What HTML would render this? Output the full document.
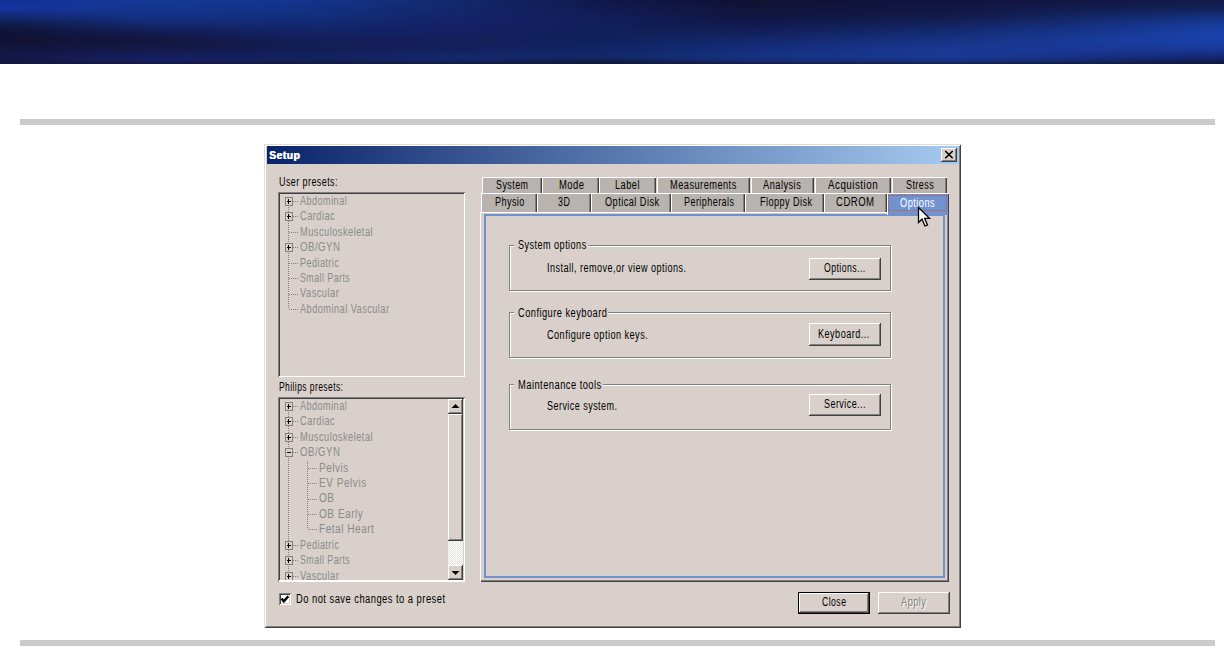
<!DOCTYPE html>
<html><head><meta charset="utf-8">
<style>
*{margin:0;padding:0;box-sizing:border-box}
html,body{width:1224px;height:653px;overflow:hidden;background:#fff}
body{position:relative;font-family:"Liberation Sans",sans-serif}
.a{position:absolute}
.t{position:absolute;font-size:12px;line-height:12px;white-space:nowrap;transform-origin:0 0}
.banner{left:0;top:0;width:1224px;height:63px;
 background:
  linear-gradient(180deg, rgba(10,10,40,0) 0%, rgba(10,10,40,0) 100%),
  radial-gradient(ellipse 260px 40px at 130px 50px, rgba(16,14,40,.85), rgba(16,14,40,0)),
  radial-gradient(ellipse 300px 30px at 760px 5px, rgba(14,12,36,.9), rgba(14,12,36,0)),
  radial-gradient(ellipse 200px 40px at 1180px 45px, rgba(35,80,200,.9), rgba(35,80,200,0)),
  radial-gradient(ellipse 250px 25px at 200px 8px, rgba(28,64,168,.8), rgba(28,64,168,0)),
  linear-gradient(90deg,#14286e 0%,#17307f 30%,#132a72 50%,#132563 65%,#142a78 80%,#1a3c9c 100%);
}
.rule{left:20px;width:1195px;height:6px;background:#cbcbcb}
.dlg{left:264px;top:144px;width:697px;height:484px;background:#d9d0cb;
 box-shadow:inset 1px 1px #dfdcd5, inset -1px -1px #404040, inset 2px 2px #fff, inset -2px -2px #808080}
.title{left:267px;top:146px;width:692px;height:18px;background:linear-gradient(90deg,#0a246a,#a6caf0)}
.raised{background:#d9d0cb;box-shadow:inset -1px -1px #404040, inset 1px 1px #fff, inset -2px -2px #808080}
.sunken{box-shadow:inset 1px 1px #808080, inset -1px -1px #fff, inset 2px 2px #404040, inset -2px -2px #d9d0cb}
.tab{background:#b8b3ae;box-shadow:inset 1px 1px #fff, inset -1px 0 #404040, inset -2px 0 #808080}
.etch{box-shadow:inset 1px 1px #808080, 1px 1px #fff, inset -1px -1px #fff}
.pbox{width:8px;height:9px;border:1px solid #808080;background:#d9d0cb}
.pbox:before{content:"";position:absolute;left:1px;top:3px;width:4px;height:1px;background:#000}
.pbox.plus:after{content:"";position:absolute;left:2px;top:1px;width:1px;height:5px;background:#000}
.vd{width:1px;background-image:linear-gradient(180deg,#808080 50%,transparent 50%);background-size:1px 2px}
.hd{height:1px;background-image:linear-gradient(90deg,#808080 50%,transparent 50%);background-size:2px 1px}
.z{z-index:5}
</style></head><body>
<div class="a" style="left:0;top:0;width:1224px;height:64px;overflow:hidden"><div class="a" style="left:0px;top:0;width:12px;height:64px;background:linear-gradient(180deg,rgb(18,48,153) 0.8%,rgb(21,52,159) 13.3%,rgb(19,40,115) 25.8%,rgb(15,28,71) 38.3%,rgb(15,19,53) 50.8%,rgb(16,18,53) 63.3%,rgb(18,21,61) 75.8%,rgb(19,23,70) 88.3%,rgb(19,24,69) 94.5%,rgb(17,24,61) 99.2%)"></div>
<div class="a" style="left:12px;top:0;width:12px;height:64px;background:linear-gradient(180deg,rgb(18,49,153) 0.8%,rgb(21,52,157) 13.3%,rgb(19,41,116) 25.8%,rgb(15,29,74) 38.3%,rgb(15,20,56) 50.8%,rgb(16,18,54) 63.3%,rgb(18,21,62) 75.8%,rgb(20,24,73) 88.3%,rgb(19,24,71) 94.5%,rgb(18,24,61) 99.2%)"></div>
<div class="a" style="left:24px;top:0;width:12px;height:64px;background:linear-gradient(180deg,rgb(18,49,153) 0.8%,rgb(21,52,156) 13.3%,rgb(19,42,117) 25.8%,rgb(16,30,77) 38.3%,rgb(15,20,58) 50.8%,rgb(17,18,54) 63.3%,rgb(18,21,62) 75.8%,rgb(20,24,75) 88.3%,rgb(20,25,74) 94.5%,rgb(18,24,62) 99.2%)"></div>
<div class="a" style="left:36px;top:0;width:12px;height:64px;background:linear-gradient(180deg,rgb(18,50,152) 0.8%,rgb(21,52,154) 13.3%,rgb(19,43,119) 25.8%,rgb(16,31,81) 38.3%,rgb(15,21,60) 50.8%,rgb(17,19,55) 63.3%,rgb(18,22,63) 75.8%,rgb(20,25,77) 88.3%,rgb(20,25,76) 94.5%,rgb(18,24,63) 99.2%)"></div>
<div class="a" style="left:48px;top:0;width:12px;height:64px;background:linear-gradient(180deg,rgb(18,51,152) 0.8%,rgb(21,52,153) 13.3%,rgb(19,43,120) 25.8%,rgb(16,32,84) 38.3%,rgb(16,22,63) 50.8%,rgb(17,19,56) 63.3%,rgb(18,22,64) 75.8%,rgb(20,25,79) 88.3%,rgb(20,26,78) 94.5%,rgb(18,24,64) 99.2%)"></div>
<div class="a" style="left:60px;top:0;width:12px;height:64px;background:linear-gradient(180deg,rgb(18,52,152) 0.8%,rgb(21,52,151) 13.3%,rgb(19,44,122) 25.8%,rgb(17,33,87) 38.3%,rgb(16,23,65) 50.8%,rgb(17,19,56) 63.3%,rgb(19,22,64) 75.8%,rgb(21,26,81) 88.3%,rgb(20,26,80) 94.5%,rgb(18,25,65) 99.2%)"></div>
<div class="a" style="left:72px;top:0;width:12px;height:64px;background:linear-gradient(180deg,rgb(19,53,151) 0.8%,rgb(20,53,150) 13.3%,rgb(19,45,123) 25.8%,rgb(17,34,90) 38.3%,rgb(16,23,67) 50.8%,rgb(18,20,57) 63.3%,rgb(19,23,65) 75.8%,rgb(21,26,83) 88.3%,rgb(21,27,82) 94.5%,rgb(18,25,65) 99.2%)"></div>
<div class="a" style="left:84px;top:0;width:12px;height:64px;background:linear-gradient(180deg,rgb(19,53,151) 0.8%,rgb(20,53,149) 13.3%,rgb(19,45,124) 25.8%,rgb(17,35,94) 38.3%,rgb(16,24,70) 50.8%,rgb(18,20,58) 63.3%,rgb(19,23,66) 75.8%,rgb(21,27,85) 88.3%,rgb(21,27,84) 94.5%,rgb(18,25,66) 99.2%)"></div>
<div class="a" style="left:96px;top:0;width:12px;height:64px;background:linear-gradient(180deg,rgb(19,54,151) 0.8%,rgb(20,53,147) 13.3%,rgb(19,46,126) 25.8%,rgb(17,36,97) 38.3%,rgb(17,25,72) 50.8%,rgb(18,20,58) 63.3%,rgb(19,23,67) 75.8%,rgb(21,28,88) 88.3%,rgb(21,28,86) 94.5%,rgb(18,25,67) 99.2%)"></div>
<div class="a" style="left:108px;top:0;width:12px;height:64px;background:linear-gradient(180deg,rgb(19,55,151) 0.8%,rgb(20,53,146) 13.3%,rgb(19,47,127) 25.8%,rgb(18,37,100) 38.3%,rgb(17,25,74) 50.8%,rgb(19,20,59) 63.3%,rgb(19,24,67) 75.8%,rgb(22,28,90) 88.3%,rgb(21,28,88) 94.5%,rgb(18,25,68) 99.2%)"></div>
<div class="a" style="left:120px;top:0;width:12px;height:64px;background:linear-gradient(180deg,rgb(19,56,150) 0.8%,rgb(20,53,144) 13.3%,rgb(19,48,129) 25.8%,rgb(18,38,104) 38.3%,rgb(17,26,77) 50.8%,rgb(19,21,60) 63.3%,rgb(19,24,68) 75.8%,rgb(22,29,92) 88.3%,rgb(22,29,90) 94.5%,rgb(18,25,69) 99.2%)"></div>
<div class="a" style="left:132px;top:0;width:12px;height:64px;background:linear-gradient(180deg,rgb(19,56,150) 0.8%,rgb(20,53,143) 13.3%,rgb(19,48,130) 25.8%,rgb(18,39,107) 38.3%,rgb(18,27,79) 50.8%,rgb(19,21,61) 63.3%,rgb(19,24,69) 75.8%,rgb(22,29,94) 88.3%,rgb(22,29,93) 94.5%,rgb(18,26,69) 99.2%)"></div>
<div class="a" style="left:144px;top:0;width:12px;height:64px;background:linear-gradient(180deg,rgb(19,57,150) 0.8%,rgb(20,53,141) 13.3%,rgb(19,49,131) 25.8%,rgb(19,40,110) 38.3%,rgb(18,28,81) 50.8%,rgb(19,21,61) 63.3%,rgb(19,25,69) 75.8%,rgb(22,30,96) 88.3%,rgb(22,30,95) 94.5%,rgb(19,26,70) 99.2%)"></div>
<div class="a" style="left:156px;top:0;width:12px;height:64px;background:linear-gradient(180deg,rgb(19,57,149) 0.8%,rgb(19,53,140) 13.3%,rgb(19,49,132) 25.8%,rgb(19,40,112) 38.3%,rgb(18,28,83) 50.8%,rgb(19,22,63) 63.3%,rgb(19,25,70) 75.8%,rgb(22,30,97) 88.3%,rgb(22,30,95) 94.5%,rgb(19,26,70) 99.2%)"></div>
<div class="a" style="left:168px;top:0;width:12px;height:64px;background:linear-gradient(180deg,rgb(19,57,149) 0.8%,rgb(19,53,140) 13.3%,rgb(19,49,131) 25.8%,rgb(19,40,112) 38.3%,rgb(18,29,85) 50.8%,rgb(19,23,65) 63.3%,rgb(19,25,71) 75.8%,rgb(22,30,96) 88.3%,rgb(22,30,94) 94.5%,rgb(18,26,70) 99.2%)"></div>
<div class="a" style="left:180px;top:0;width:12px;height:64px;background:linear-gradient(180deg,rgb(19,56,148) 0.8%,rgb(19,53,139) 13.3%,rgb(19,49,130) 25.8%,rgb(19,40,112) 38.3%,rgb(18,29,86) 50.8%,rgb(19,23,67) 63.3%,rgb(19,26,72) 75.8%,rgb(22,31,96) 88.3%,rgb(21,30,94) 94.5%,rgb(18,26,70) 99.2%)"></div>
<div class="a" style="left:192px;top:0;width:12px;height:64px;background:linear-gradient(180deg,rgb(19,56,148) 0.8%,rgb(19,52,139) 13.3%,rgb(19,49,130) 25.8%,rgb(19,40,112) 38.3%,rgb(18,30,88) 50.8%,rgb(19,24,69) 63.3%,rgb(19,26,74) 75.8%,rgb(21,31,96) 88.3%,rgb(21,30,93) 94.5%,rgb(18,26,70) 99.2%)"></div>
<div class="a" style="left:204px;top:0;width:12px;height:64px;background:linear-gradient(180deg,rgb(19,55,147) 0.8%,rgb(19,52,138) 13.3%,rgb(19,48,129) 25.8%,rgb(18,40,112) 38.3%,rgb(18,30,89) 50.8%,rgb(19,25,71) 63.3%,rgb(19,26,75) 75.8%,rgb(21,31,95) 88.3%,rgb(21,31,92) 94.5%,rgb(18,26,69) 99.2%)"></div>
<div class="a" style="left:216px;top:0;width:12px;height:64px;background:linear-gradient(180deg,rgb(19,55,147) 0.8%,rgb(19,52,138) 13.3%,rgb(19,48,128) 25.8%,rgb(18,40,112) 38.3%,rgb(18,31,91) 50.8%,rgb(19,26,74) 63.3%,rgb(19,27,76) 75.8%,rgb(21,31,95) 88.3%,rgb(20,31,92) 94.5%,rgb(18,26,69) 99.2%)"></div>
<div class="a" style="left:228px;top:0;width:12px;height:64px;background:linear-gradient(180deg,rgb(19,54,146) 0.8%,rgb(19,51,137) 13.3%,rgb(18,48,128) 25.8%,rgb(18,40,112) 38.3%,rgb(18,31,92) 50.8%,rgb(19,26,76) 63.3%,rgb(19,27,77) 75.8%,rgb(20,31,95) 88.3%,rgb(20,31,91) 94.5%,rgb(18,26,69) 99.2%)"></div>
<div class="a" style="left:240px;top:0;width:12px;height:64px;background:linear-gradient(180deg,rgb(19,54,146) 0.8%,rgb(19,51,136) 13.3%,rgb(18,48,127) 25.8%,rgb(18,40,112) 38.3%,rgb(18,32,94) 50.8%,rgb(18,27,78) 63.3%,rgb(18,27,78) 75.8%,rgb(20,32,95) 88.3%,rgb(20,31,90) 94.5%,rgb(18,26,69) 99.2%)"></div>
<div class="a" style="left:252px;top:0;width:12px;height:64px;background:linear-gradient(180deg,rgb(19,53,145) 0.8%,rgb(18,51,136) 13.3%,rgb(18,48,126) 25.8%,rgb(18,40,112) 38.3%,rgb(18,33,95) 50.8%,rgb(18,28,80) 63.3%,rgb(18,28,79) 75.8%,rgb(20,32,94) 88.3%,rgb(19,31,90) 94.5%,rgb(18,26,68) 99.2%)"></div>
<div class="a" style="left:264px;top:0;width:12px;height:64px;background:linear-gradient(180deg,rgb(19,53,145) 0.8%,rgb(18,50,135) 13.3%,rgb(18,47,126) 25.8%,rgb(18,40,112) 38.3%,rgb(18,33,97) 50.8%,rgb(18,28,82) 63.3%,rgb(18,28,80) 75.8%,rgb(19,32,94) 88.3%,rgb(19,31,89) 94.5%,rgb(17,26,68) 99.2%)"></div>
<div class="a" style="left:276px;top:0;width:12px;height:64px;background:linear-gradient(180deg,rgb(19,52,144) 0.8%,rgb(18,50,135) 13.3%,rgb(18,47,125) 25.8%,rgb(18,40,112) 38.3%,rgb(18,34,98) 50.8%,rgb(18,29,84) 63.3%,rgb(18,28,81) 75.8%,rgb(19,32,94) 88.3%,rgb(19,31,88) 94.5%,rgb(17,26,68) 99.2%)"></div>
<div class="a" style="left:288px;top:0;width:12px;height:64px;background:linear-gradient(180deg,rgb(19,52,144) 0.8%,rgb(18,50,134) 13.3%,rgb(18,47,124) 25.8%,rgb(18,40,112) 38.3%,rgb(18,34,100) 50.8%,rgb(18,30,86) 63.3%,rgb(18,29,83) 75.8%,rgb(19,32,93) 88.3%,rgb(18,31,88) 94.5%,rgb(17,26,68) 99.2%)"></div>
<div class="a" style="left:300px;top:0;width:12px;height:64px;background:linear-gradient(180deg,rgb(19,51,142) 0.8%,rgb(18,49,133) 13.3%,rgb(18,46,123) 25.8%,rgb(18,40,112) 38.3%,rgb(18,34,100) 50.8%,rgb(18,30,88) 63.3%,rgb(18,29,84) 75.8%,rgb(18,33,94) 88.3%,rgb(18,32,88) 94.5%,rgb(17,27,68) 99.2%)"></div>
<div class="a" style="left:312px;top:0;width:12px;height:64px;background:linear-gradient(180deg,rgb(19,50,139) 0.8%,rgb(18,48,131) 13.3%,rgb(18,45,122) 25.8%,rgb(18,40,111) 38.3%,rgb(19,34,100) 50.8%,rgb(18,30,88) 63.3%,rgb(18,29,84) 75.8%,rgb(19,33,95) 88.3%,rgb(18,32,89) 94.5%,rgb(17,27,68) 99.2%)"></div>
<div class="a" style="left:324px;top:0;width:12px;height:64px;background:linear-gradient(180deg,rgb(19,50,137) 0.8%,rgb(18,47,129) 13.3%,rgb(18,45,120) 25.8%,rgb(19,39,111) 38.3%,rgb(19,34,100) 50.8%,rgb(18,30,88) 63.3%,rgb(18,30,85) 75.8%,rgb(19,34,96) 88.3%,rgb(18,33,90) 94.5%,rgb(17,27,68) 99.2%)"></div>
<div class="a" style="left:336px;top:0;width:12px;height:64px;background:linear-gradient(180deg,rgb(19,49,134) 0.8%,rgb(18,46,127) 13.3%,rgb(18,44,119) 25.8%,rgb(19,38,110) 38.3%,rgb(19,34,99) 50.8%,rgb(18,30,88) 63.3%,rgb(18,30,86) 75.8%,rgb(19,35,97) 88.3%,rgb(19,33,91) 94.5%,rgb(17,27,69) 99.2%)"></div>
<div class="a" style="left:348px;top:0;width:12px;height:64px;background:linear-gradient(180deg,rgb(19,48,131) 0.8%,rgb(18,46,124) 13.3%,rgb(18,43,117) 25.8%,rgb(19,38,109) 38.3%,rgb(19,34,99) 50.8%,rgb(19,30,88) 63.3%,rgb(18,30,86) 75.8%,rgb(19,35,98) 88.3%,rgb(19,34,92) 94.5%,rgb(17,27,69) 99.2%)"></div>
<div class="a" style="left:360px;top:0;width:12px;height:64px;background:linear-gradient(180deg,rgb(19,47,129) 0.8%,rgb(18,45,122) 13.3%,rgb(19,42,116) 25.8%,rgb(19,37,109) 38.3%,rgb(19,33,99) 50.8%,rgb(19,30,89) 63.3%,rgb(19,30,87) 75.8%,rgb(19,36,99) 88.3%,rgb(19,34,93) 94.5%,rgb(17,28,70) 99.2%)"></div>
<div class="a" style="left:372px;top:0;width:12px;height:64px;background:linear-gradient(180deg,rgb(19,46,126) 0.8%,rgb(19,44,120) 13.3%,rgb(19,41,114) 25.8%,rgb(19,37,108) 38.3%,rgb(19,33,99) 50.8%,rgb(19,30,89) 63.3%,rgb(19,31,88) 75.8%,rgb(19,36,101) 88.3%,rgb(19,35,94) 94.5%,rgb(17,28,70) 99.2%)"></div>
<div class="a" style="left:384px;top:0;width:12px;height:64px;background:linear-gradient(180deg,rgb(19,46,123) 0.8%,rgb(19,43,118) 13.3%,rgb(19,41,113) 25.8%,rgb(19,36,107) 38.3%,rgb(19,33,98) 50.8%,rgb(19,30,89) 63.3%,rgb(19,31,88) 75.8%,rgb(20,37,102) 88.3%,rgb(19,35,95) 94.5%,rgb(17,28,70) 99.2%)"></div>
<div class="a" style="left:396px;top:0;width:12px;height:64px;background:linear-gradient(180deg,rgb(19,45,120) 0.8%,rgb(19,42,116) 13.3%,rgb(19,40,112) 25.8%,rgb(20,36,106) 38.3%,rgb(20,33,98) 50.8%,rgb(19,30,89) 63.3%,rgb(19,31,89) 75.8%,rgb(20,37,103) 88.3%,rgb(19,36,96) 94.5%,rgb(18,28,71) 99.2%)"></div>
<div class="a" style="left:408px;top:0;width:12px;height:64px;background:linear-gradient(180deg,rgb(19,44,118) 0.8%,rgb(19,41,114) 13.3%,rgb(19,39,110) 25.8%,rgb(20,35,106) 38.3%,rgb(20,33,98) 50.8%,rgb(19,30,89) 63.3%,rgb(19,31,90) 75.8%,rgb(20,38,104) 88.3%,rgb(19,36,97) 94.5%,rgb(18,28,71) 99.2%)"></div>
<div class="a" style="left:420px;top:0;width:12px;height:64px;background:linear-gradient(180deg,rgb(19,43,115) 0.8%,rgb(19,41,112) 13.3%,rgb(19,38,109) 25.8%,rgb(20,35,105) 38.3%,rgb(20,32,98) 50.8%,rgb(19,30,90) 63.3%,rgb(19,32,90) 75.8%,rgb(20,39,105) 88.3%,rgb(19,37,98) 94.5%,rgb(18,29,72) 99.2%)"></div>
<div class="a" style="left:432px;top:0;width:12px;height:64px;background:linear-gradient(180deg,rgb(19,42,112) 0.8%,rgb(19,40,110) 13.3%,rgb(20,37,107) 25.8%,rgb(20,34,104) 38.3%,rgb(20,32,97) 50.8%,rgb(20,30,90) 63.3%,rgb(20,32,91) 75.8%,rgb(20,39,106) 88.3%,rgb(20,37,99) 94.5%,rgb(18,29,72) 99.2%)"></div>
<div class="a" style="left:444px;top:0;width:12px;height:64px;background:linear-gradient(180deg,rgb(19,42,110) 0.8%,rgb(19,39,108) 13.3%,rgb(20,36,106) 25.8%,rgb(20,34,104) 38.3%,rgb(20,32,97) 50.8%,rgb(20,31,90) 63.3%,rgb(20,32,92) 75.8%,rgb(20,40,108) 88.3%,rgb(20,38,100) 94.5%,rgb(18,29,72) 99.2%)"></div>
<div class="a" style="left:456px;top:0;width:12px;height:64px;background:linear-gradient(180deg,rgb(18,40,107) 0.8%,rgb(19,38,106) 13.3%,rgb(20,36,104) 25.8%,rgb(20,34,103) 38.3%,rgb(20,32,97) 50.8%,rgb(19,31,90) 63.3%,rgb(19,33,92) 75.8%,rgb(20,40,107) 88.3%,rgb(19,37,98) 94.5%,rgb(18,29,71) 99.2%)"></div>
<div class="a" style="left:468px;top:0;width:12px;height:64px;background:linear-gradient(180deg,rgb(18,39,104) 0.8%,rgb(19,37,103) 13.3%,rgb(19,35,103) 25.8%,rgb(20,33,101) 38.3%,rgb(19,32,96) 50.8%,rgb(19,31,91) 63.3%,rgb(19,33,93) 75.8%,rgb(20,40,107) 88.3%,rgb(19,37,96) 94.5%,rgb(17,28,70) 99.2%)"></div>
<div class="a" style="left:480px;top:0;width:12px;height:64px;background:linear-gradient(180deg,rgb(18,37,101) 0.8%,rgb(19,36,101) 13.3%,rgb(19,35,102) 25.8%,rgb(19,33,100) 38.3%,rgb(19,32,95) 50.8%,rgb(19,31,91) 63.3%,rgb(19,33,94) 75.8%,rgb(20,40,107) 88.3%,rgb(19,36,95) 94.5%,rgb(17,28,69) 99.2%)"></div>
<div class="a" style="left:492px;top:0;width:12px;height:64px;background:linear-gradient(180deg,rgb(18,36,98) 0.8%,rgb(18,35,99) 13.3%,rgb(19,34,100) 25.8%,rgb(19,33,99) 38.3%,rgb(19,32,95) 50.8%,rgb(18,32,91) 63.3%,rgb(18,34,95) 75.8%,rgb(20,40,106) 88.3%,rgb(19,36,93) 94.5%,rgb(17,28,68) 99.2%)"></div>
<div class="a" style="left:504px;top:0;width:12px;height:64px;background:linear-gradient(180deg,rgb(17,34,95) 0.8%,rgb(18,34,97) 13.3%,rgb(19,34,99) 25.8%,rgb(19,33,98) 38.3%,rgb(18,32,94) 50.8%,rgb(18,32,92) 63.3%,rgb(18,34,95) 75.8%,rgb(19,40,106) 88.3%,rgb(18,35,91) 94.5%,rgb(17,27,67) 99.2%)"></div>
<div class="a" style="left:516px;top:0;width:12px;height:64px;background:linear-gradient(180deg,rgb(17,33,92) 0.8%,rgb(18,33,95) 13.3%,rgb(19,33,98) 25.8%,rgb(18,32,96) 38.3%,rgb(18,32,93) 50.8%,rgb(17,32,92) 63.3%,rgb(18,35,96) 75.8%,rgb(19,40,106) 88.3%,rgb(18,35,89) 94.5%,rgb(17,27,66) 99.2%)"></div>
<div class="a" style="left:528px;top:0;width:12px;height:64px;background:linear-gradient(180deg,rgb(17,31,89) 0.8%,rgb(18,32,93) 13.3%,rgb(18,33,97) 25.8%,rgb(18,32,95) 38.3%,rgb(17,32,93) 50.8%,rgb(17,33,92) 63.3%,rgb(17,35,97) 75.8%,rgb(19,40,105) 88.3%,rgb(18,34,87) 94.5%,rgb(17,27,65) 99.2%)"></div>
<div class="a" style="left:540px;top:0;width:12px;height:64px;background:linear-gradient(180deg,rgb(17,30,86) 0.8%,rgb(17,31,91) 13.3%,rgb(18,32,95) 25.8%,rgb(18,32,94) 38.3%,rgb(17,32,92) 50.8%,rgb(17,33,93) 63.3%,rgb(17,35,98) 75.8%,rgb(19,40,105) 88.3%,rgb(18,34,85) 94.5%,rgb(17,26,64) 99.2%)"></div>
<div class="a" style="left:552px;top:0;width:12px;height:64px;background:linear-gradient(180deg,rgb(16,29,84) 0.8%,rgb(17,30,89) 13.3%,rgb(18,32,94) 25.8%,rgb(17,32,93) 38.3%,rgb(17,32,91) 50.8%,rgb(16,33,93) 63.3%,rgb(17,36,98) 75.8%,rgb(19,40,105) 88.3%,rgb(17,33,83) 94.5%,rgb(16,26,63) 99.2%)"></div>
<div class="a" style="left:564px;top:0;width:12px;height:64px;background:linear-gradient(180deg,rgb(16,27,81) 0.8%,rgb(17,29,87) 13.3%,rgb(18,31,93) 25.8%,rgb(17,31,91) 38.3%,rgb(16,32,91) 50.8%,rgb(16,33,93) 63.3%,rgb(17,36,99) 75.8%,rgb(19,40,105) 88.3%,rgb(17,33,81) 94.5%,rgb(16,26,62) 99.2%)"></div>
<div class="a" style="left:576px;top:0;width:12px;height:64px;background:linear-gradient(180deg,rgb(16,26,78) 0.8%,rgb(17,28,85) 13.3%,rgb(18,30,91) 25.8%,rgb(17,31,90) 38.3%,rgb(16,32,90) 50.8%,rgb(15,34,94) 63.3%,rgb(16,37,100) 75.8%,rgb(18,40,104) 88.3%,rgb(17,32,79) 94.5%,rgb(16,25,61) 99.2%)"></div>
<div class="a" style="left:588px;top:0;width:12px;height:64px;background:linear-gradient(180deg,rgb(16,24,75) 0.8%,rgb(17,27,83) 13.3%,rgb(17,30,90) 25.8%,rgb(16,31,89) 38.3%,rgb(16,32,89) 50.8%,rgb(15,34,94) 63.3%,rgb(16,37,101) 75.8%,rgb(18,40,104) 88.3%,rgb(17,32,77) 94.5%,rgb(16,25,60) 99.2%)"></div>
<div class="a" style="left:600px;top:0;width:12px;height:64px;background:linear-gradient(180deg,rgb(16,23,73) 0.8%,rgb(17,26,81) 13.3%,rgb(17,29,88) 25.8%,rgb(16,30,88) 38.3%,rgb(15,32,89) 50.8%,rgb(15,34,95) 63.3%,rgb(16,38,102) 75.8%,rgb(18,40,105) 88.3%,rgb(17,32,78) 94.5%,rgb(16,25,60) 99.2%)"></div>
<div class="a" style="left:612px;top:0;width:12px;height:64px;background:linear-gradient(180deg,rgb(16,23,71) 0.8%,rgb(17,26,79) 13.3%,rgb(17,29,86) 25.8%,rgb(16,30,87) 38.3%,rgb(16,32,89) 50.8%,rgb(15,35,96) 63.3%,rgb(16,38,104) 75.8%,rgb(19,41,107) 88.3%,rgb(17,33,81) 94.5%,rgb(16,25,62) 99.2%)"></div>
<div class="a" style="left:624px;top:0;width:12px;height:64px;background:linear-gradient(180deg,rgb(16,22,69) 0.8%,rgb(17,25,77) 13.3%,rgb(17,28,85) 25.8%,rgb(16,30,86) 38.3%,rgb(16,32,89) 50.8%,rgb(16,35,97) 63.3%,rgb(17,39,105) 75.8%,rgb(19,42,109) 88.3%,rgb(17,34,84) 94.5%,rgb(16,26,63) 99.2%)"></div>
<div class="a" style="left:636px;top:0;width:12px;height:64px;background:linear-gradient(180deg,rgb(16,22,67) 0.8%,rgb(17,25,75) 13.3%,rgb(17,27,83) 25.8%,rgb(16,29,85) 38.3%,rgb(16,32,89) 50.8%,rgb(16,36,98) 63.3%,rgb(17,39,107) 75.8%,rgb(19,42,111) 88.3%,rgb(18,35,88) 94.5%,rgb(17,27,65) 99.2%)"></div>
<div class="a" style="left:648px;top:0;width:12px;height:64px;background:linear-gradient(180deg,rgb(16,21,65) 0.8%,rgb(17,24,73) 13.3%,rgb(17,27,81) 25.8%,rgb(16,29,85) 38.3%,rgb(16,32,90) 50.8%,rgb(17,36,99) 63.3%,rgb(17,40,109) 75.8%,rgb(20,43,113) 88.3%,rgb(18,36,91) 94.5%,rgb(17,27,66) 99.2%)"></div>
<div class="a" style="left:660px;top:0;width:12px;height:64px;background:linear-gradient(180deg,rgb(16,21,63) 0.8%,rgb(17,24,71) 13.3%,rgb(17,26,79) 25.8%,rgb(16,28,84) 38.3%,rgb(17,32,90) 50.8%,rgb(17,37,100) 63.3%,rgb(18,41,110) 75.8%,rgb(20,44,115) 88.3%,rgb(19,37,94) 94.5%,rgb(17,28,68) 99.2%)"></div>
<div class="a" style="left:672px;top:0;width:12px;height:64px;background:linear-gradient(180deg,rgb(16,20,61) 0.8%,rgb(17,23,69) 13.3%,rgb(17,26,77) 25.8%,rgb(16,28,83) 38.3%,rgb(17,32,90) 50.8%,rgb(17,37,101) 63.3%,rgb(18,41,112) 75.8%,rgb(20,44,117) 88.3%,rgb(19,38,97) 94.5%,rgb(17,28,69) 99.2%)"></div>
<div class="a" style="left:684px;top:0;width:12px;height:64px;background:linear-gradient(180deg,rgb(16,20,59) 0.8%,rgb(17,22,67) 13.3%,rgb(17,25,75) 25.8%,rgb(16,27,82) 38.3%,rgb(17,32,90) 50.8%,rgb(18,37,102) 63.3%,rgb(18,42,114) 75.8%,rgb(20,45,119) 88.3%,rgb(19,39,100) 94.5%,rgb(17,29,71) 99.2%)"></div>
<div class="a" style="left:696px;top:0;width:12px;height:64px;background:linear-gradient(180deg,rgb(16,19,57) 0.8%,rgb(17,22,65) 13.3%,rgb(17,24,73) 25.8%,rgb(16,27,81) 38.3%,rgb(17,32,90) 50.8%,rgb(18,38,103) 63.3%,rgb(19,42,115) 75.8%,rgb(21,46,121) 88.3%,rgb(20,40,104) 94.5%,rgb(18,29,72) 99.2%)"></div>
<div class="a" style="left:708px;top:0;width:12px;height:64px;background:linear-gradient(180deg,rgb(16,19,55) 0.8%,rgb(17,21,63) 13.3%,rgb(17,24,71) 25.8%,rgb(16,26,80) 38.3%,rgb(18,32,90) 50.8%,rgb(18,38,104) 63.3%,rgb(19,43,117) 75.8%,rgb(21,46,123) 88.3%,rgb(20,41,107) 94.5%,rgb(18,30,74) 99.2%)"></div>
<div class="a" style="left:720px;top:0;width:12px;height:64px;background:linear-gradient(180deg,rgb(16,18,53) 0.8%,rgb(17,21,61) 13.3%,rgb(17,23,69) 25.8%,rgb(16,26,80) 38.3%,rgb(18,32,90) 50.8%,rgb(19,39,105) 63.3%,rgb(19,44,119) 75.8%,rgb(21,47,126) 88.3%,rgb(21,42,110) 94.5%,rgb(18,30,75) 99.2%)"></div>
<div class="a" style="left:732px;top:0;width:12px;height:64px;background:linear-gradient(180deg,rgb(16,18,51) 0.8%,rgb(17,20,59) 13.3%,rgb(17,23,67) 25.8%,rgb(16,26,79) 38.3%,rgb(18,32,91) 50.8%,rgb(19,39,106) 63.3%,rgb(20,44,121) 75.8%,rgb(22,48,128) 88.3%,rgb(21,43,113) 94.5%,rgb(18,31,77) 99.2%)"></div>
<div class="a" style="left:744px;top:0;width:12px;height:64px;background:linear-gradient(180deg,rgb(17,18,50) 0.8%,rgb(17,20,57) 13.3%,rgb(17,22,65) 25.8%,rgb(16,25,78) 38.3%,rgb(18,33,91) 50.8%,rgb(20,40,108) 63.3%,rgb(20,45,122) 75.8%,rgb(22,49,130) 88.3%,rgb(21,44,116) 94.5%,rgb(18,31,78) 99.2%)"></div>
<div class="a" style="left:756px;top:0;width:12px;height:64px;background:linear-gradient(180deg,rgb(17,18,50) 0.8%,rgb(17,20,58) 13.3%,rgb(17,22,66) 25.8%,rgb(16,26,79) 38.3%,rgb(18,33,92) 50.8%,rgb(20,40,109) 63.3%,rgb(21,46,124) 75.8%,rgb(22,49,131) 88.3%,rgb(21,45,117) 94.5%,rgb(18,31,79) 99.2%)"></div>
<div class="a" style="left:768px;top:0;width:12px;height:64px;background:linear-gradient(180deg,rgb(17,18,51) 0.8%,rgb(17,20,58) 13.3%,rgb(17,22,66) 25.8%,rgb(16,26,80) 38.3%,rgb(19,34,94) 50.8%,rgb(20,41,111) 63.3%,rgb(21,46,125) 75.8%,rgb(22,50,132) 88.3%,rgb(22,45,118) 94.5%,rgb(18,32,79) 99.2%)"></div>
<div class="a" style="left:780px;top:0;width:12px;height:64px;background:linear-gradient(180deg,rgb(17,18,52) 0.8%,rgb(17,20,59) 13.3%,rgb(17,23,67) 25.8%,rgb(16,27,81) 38.3%,rgb(19,34,95) 50.8%,rgb(20,42,112) 63.3%,rgb(21,47,126) 75.8%,rgb(23,50,133) 88.3%,rgb(22,45,119) 94.5%,rgb(18,32,79) 99.2%)"></div>
<div class="a" style="left:792px;top:0;width:12px;height:64px;background:linear-gradient(180deg,rgb(17,18,53) 0.8%,rgb(17,20,60) 13.3%,rgb(17,23,67) 25.8%,rgb(16,28,82) 38.3%,rgb(19,35,97) 50.8%,rgb(20,42,114) 63.3%,rgb(21,48,128) 75.8%,rgb(23,51,135) 88.3%,rgb(22,46,120) 94.5%,rgb(19,32,80) 99.2%)"></div>
<div class="a" style="left:804px;top:0;width:12px;height:64px;background:linear-gradient(180deg,rgb(17,18,54) 0.8%,rgb(17,21,60) 13.3%,rgb(17,23,68) 25.8%,rgb(17,28,83) 38.3%,rgb(19,36,98) 50.8%,rgb(21,43,115) 63.3%,rgb(22,48,129) 75.8%,rgb(23,51,136) 88.3%,rgb(22,46,121) 94.5%,rgb(19,32,80) 99.2%)"></div>
<div class="a" style="left:816px;top:0;width:12px;height:64px;background:linear-gradient(180deg,rgb(17,18,55) 0.8%,rgb(17,21,61) 13.3%,rgb(17,24,68) 25.8%,rgb(17,29,84) 38.3%,rgb(19,36,100) 50.8%,rgb(21,44,117) 63.3%,rgb(22,49,131) 75.8%,rgb(23,52,137) 88.3%,rgb(22,47,122) 94.5%,rgb(19,32,80) 99.2%)"></div>
<div class="a" style="left:828px;top:0;width:12px;height:64px;background:linear-gradient(180deg,rgb(17,18,55) 0.8%,rgb(17,21,62) 13.3%,rgb(17,24,69) 25.8%,rgb(17,29,85) 38.3%,rgb(19,37,101) 50.8%,rgb(21,44,118) 63.3%,rgb(22,50,132) 75.8%,rgb(23,52,138) 88.3%,rgb(22,47,123) 94.5%,rgb(19,32,81) 99.2%)"></div>
<div class="a" style="left:840px;top:0;width:12px;height:64px;background:linear-gradient(180deg,rgb(17,18,56) 0.8%,rgb(17,21,62) 13.3%,rgb(17,24,69) 25.8%,rgb(17,30,86) 38.3%,rgb(19,38,103) 50.8%,rgb(21,45,120) 63.3%,rgb(23,50,133) 75.8%,rgb(24,53,140) 88.3%,rgb(22,47,124) 94.5%,rgb(19,32,81) 99.2%)"></div>
<div class="a" style="left:852px;top:0;width:12px;height:64px;background:linear-gradient(180deg,rgb(17,19,57) 0.8%,rgb(17,21,63) 13.3%,rgb(17,24,70) 25.8%,rgb(17,31,87) 38.3%,rgb(19,38,104) 50.8%,rgb(22,46,121) 63.3%,rgb(23,51,135) 75.8%,rgb(24,53,141) 88.3%,rgb(23,48,125) 94.5%,rgb(19,33,82) 99.2%)"></div>
<div class="a" style="left:864px;top:0;width:12px;height:64px;background:linear-gradient(180deg,rgb(17,19,58) 0.8%,rgb(17,21,63) 13.3%,rgb(18,25,71) 25.8%,rgb(18,31,88) 38.3%,rgb(20,39,106) 50.8%,rgb(22,46,123) 63.3%,rgb(23,52,136) 75.8%,rgb(24,54,142) 88.3%,rgb(23,48,126) 94.5%,rgb(19,33,82) 99.2%)"></div>
<div class="a" style="left:876px;top:0;width:12px;height:64px;background:linear-gradient(180deg,rgb(17,19,59) 0.8%,rgb(17,22,64) 13.3%,rgb(18,25,71) 25.8%,rgb(18,32,90) 38.3%,rgb(20,40,107) 50.8%,rgb(22,47,124) 63.3%,rgb(24,52,138) 75.8%,rgb(24,54,143) 88.3%,rgb(23,49,127) 94.5%,rgb(19,33,82) 99.2%)"></div>
<div class="a" style="left:888px;top:0;width:12px;height:64px;background:linear-gradient(180deg,rgb(17,19,60) 0.8%,rgb(17,22,65) 13.3%,rgb(18,25,72) 25.8%,rgb(18,32,91) 38.3%,rgb(20,40,109) 50.8%,rgb(22,48,126) 63.3%,rgb(24,53,139) 75.8%,rgb(25,55,144) 88.3%,rgb(23,49,128) 94.5%,rgb(19,33,83) 99.2%)"></div>
<div class="a" style="left:900px;top:0;width:12px;height:64px;background:linear-gradient(180deg,rgb(17,19,60) 0.8%,rgb(17,22,65) 13.3%,rgb(18,26,72) 25.8%,rgb(18,33,92) 38.3%,rgb(20,41,110) 50.8%,rgb(23,48,127) 63.3%,rgb(24,54,140) 75.8%,rgb(25,55,146) 88.3%,rgb(23,49,129) 94.5%,rgb(19,33,83) 99.2%)"></div>
<div class="a" style="left:912px;top:0;width:12px;height:64px;background:linear-gradient(180deg,rgb(17,19,61) 0.8%,rgb(17,22,66) 13.3%,rgb(18,26,73) 25.8%,rgb(18,34,93) 38.3%,rgb(20,42,112) 50.8%,rgb(23,49,129) 63.3%,rgb(25,54,142) 75.8%,rgb(25,56,147) 88.3%,rgb(23,50,130) 94.5%,rgb(19,33,83) 99.2%)"></div>
<div class="a" style="left:924px;top:0;width:12px;height:64px;background:linear-gradient(180deg,rgb(17,19,62) 0.8%,rgb(17,22,67) 13.3%,rgb(18,26,73) 25.8%,rgb(18,34,94) 38.3%,rgb(20,42,113) 50.8%,rgb(23,50,130) 63.3%,rgb(25,55,143) 75.8%,rgb(25,56,148) 88.3%,rgb(23,50,131) 94.5%,rgb(19,33,84) 99.2%)"></div>
<div class="a" style="left:936px;top:0;width:12px;height:64px;background:linear-gradient(180deg,rgb(17,19,63) 0.8%,rgb(17,23,67) 13.3%,rgb(18,26,74) 25.8%,rgb(19,35,95) 38.3%,rgb(20,43,115) 50.8%,rgb(23,50,132) 63.3%,rgb(25,56,144) 75.8%,rgb(25,57,149) 88.3%,rgb(24,50,132) 94.5%,rgb(19,34,84) 99.2%)"></div>
<div class="a" style="left:948px;top:0;width:12px;height:64px;background:linear-gradient(180deg,rgb(18,20,64) 0.8%,rgb(18,23,68) 13.3%,rgb(18,27,75) 25.8%,rgb(19,35,96) 38.3%,rgb(20,44,117) 50.8%,rgb(24,51,133) 63.3%,rgb(25,56,145) 75.8%,rgb(25,57,150) 88.3%,rgb(24,50,132) 94.5%,rgb(19,34,84) 99.2%)"></div>
<div class="a" style="left:960px;top:0;width:12px;height:64px;background:linear-gradient(180deg,rgb(18,20,64) 0.8%,rgb(18,23,69) 13.3%,rgb(18,28,77) 25.8%,rgb(19,37,99) 38.3%,rgb(21,45,119) 50.8%,rgb(24,52,135) 63.3%,rgb(25,56,146) 75.8%,rgb(25,56,148) 88.3%,rgb(23,49,130) 94.5%,rgb(19,33,83) 99.2%)"></div>
<div class="a" style="left:972px;top:0;width:12px;height:64px;background:linear-gradient(180deg,rgb(18,20,64) 0.8%,rgb(18,24,70) 13.3%,rgb(18,29,80) 25.8%,rgb(19,38,102) 38.3%,rgb(21,46,121) 50.8%,rgb(24,52,137) 63.3%,rgb(25,56,146) 75.8%,rgb(25,55,147) 88.3%,rgb(23,49,128) 94.5%,rgb(19,33,82) 99.2%)"></div>
<div class="a" style="left:984px;top:0;width:12px;height:64px;background:linear-gradient(180deg,rgb(18,20,65) 0.8%,rgb(18,24,71) 13.3%,rgb(18,30,82) 25.8%,rgb(19,39,104) 38.3%,rgb(21,47,124) 50.8%,rgb(24,53,138) 63.3%,rgb(25,56,146) 75.8%,rgb(25,55,145) 88.3%,rgb(23,48,126) 94.5%,rgb(19,32,81) 99.2%)"></div>
<div class="a" style="left:996px;top:0;width:12px;height:64px;background:linear-gradient(180deg,rgb(18,21,65) 0.8%,rgb(18,25,72) 13.3%,rgb(18,31,84) 25.8%,rgb(19,40,107) 38.3%,rgb(21,48,126) 50.8%,rgb(24,54,140) 63.3%,rgb(25,56,147) 75.8%,rgb(24,54,143) 88.3%,rgb(22,47,124) 94.5%,rgb(19,32,80) 99.2%)"></div>
<div class="a" style="left:1008px;top:0;width:12px;height:64px;background:linear-gradient(180deg,rgb(18,21,65) 0.8%,rgb(18,25,73) 13.3%,rgb(18,32,87) 25.8%,rgb(20,41,110) 38.3%,rgb(21,49,128) 50.8%,rgb(24,54,142) 63.3%,rgb(25,56,147) 75.8%,rgb(24,53,142) 88.3%,rgb(22,46,122) 94.5%,rgb(18,31,79) 99.2%)"></div>
<div class="a" style="left:1020px;top:0;width:12px;height:64px;background:linear-gradient(180deg,rgb(18,21,66) 0.8%,rgb(18,26,74) 13.3%,rgb(18,33,89) 25.8%,rgb(20,42,112) 38.3%,rgb(22,50,131) 50.8%,rgb(24,55,144) 63.3%,rgb(25,56,147) 75.8%,rgb(24,52,140) 88.3%,rgb(22,45,120) 94.5%,rgb(18,31,78) 99.2%)"></div>
<div class="a" style="left:1032px;top:0;width:12px;height:64px;background:linear-gradient(180deg,rgb(18,21,66) 0.8%,rgb(18,26,75) 13.3%,rgb(18,34,91) 25.8%,rgb(20,43,115) 38.3%,rgb(22,50,133) 50.8%,rgb(24,56,145) 63.3%,rgb(25,56,148) 75.8%,rgb(24,52,139) 88.3%,rgb(22,44,118) 94.5%,rgb(18,31,77) 99.2%)"></div>
<div class="a" style="left:1044px;top:0;width:12px;height:64px;background:linear-gradient(180deg,rgb(18,22,66) 0.8%,rgb(18,27,76) 13.3%,rgb(19,35,94) 25.8%,rgb(20,44,117) 38.3%,rgb(22,51,136) 50.8%,rgb(24,56,147) 63.3%,rgb(25,56,148) 75.8%,rgb(23,51,137) 88.3%,rgb(21,43,116) 94.5%,rgb(18,30,76) 99.2%)"></div>
<div class="a" style="left:1056px;top:0;width:12px;height:64px;background:linear-gradient(180deg,rgb(18,22,67) 0.8%,rgb(18,27,77) 13.3%,rgb(19,36,96) 25.8%,rgb(20,45,120) 38.3%,rgb(22,52,138) 50.8%,rgb(24,57,149) 63.3%,rgb(25,56,149) 75.8%,rgb(23,50,136) 88.3%,rgb(21,42,114) 94.5%,rgb(18,30,75) 99.2%)"></div>
<div class="a" style="left:1068px;top:0;width:12px;height:64px;background:linear-gradient(180deg,rgb(18,22,67) 0.8%,rgb(18,28,78) 13.3%,rgb(19,37,98) 25.8%,rgb(20,46,123) 38.3%,rgb(22,53,140) 50.8%,rgb(24,57,150) 63.3%,rgb(25,56,149) 75.8%,rgb(23,49,134) 88.3%,rgb(21,41,112) 94.5%,rgb(18,29,75) 99.2%)"></div>
<div class="a" style="left:1080px;top:0;width:12px;height:64px;background:linear-gradient(180deg,rgb(18,22,67) 0.8%,rgb(18,28,79) 13.3%,rgb(19,38,101) 25.8%,rgb(21,48,125) 38.3%,rgb(22,54,143) 50.8%,rgb(24,58,152) 63.3%,rgb(25,56,149) 75.8%,rgb(23,48,133) 88.3%,rgb(20,40,110) 94.5%,rgb(18,29,74) 99.2%)"></div>
<div class="a" style="left:1092px;top:0;width:12px;height:64px;background:linear-gradient(180deg,rgb(18,23,68) 0.8%,rgb(18,29,80) 13.3%,rgb(19,39,103) 25.8%,rgb(21,49,128) 38.3%,rgb(23,55,145) 50.8%,rgb(25,59,154) 63.3%,rgb(25,56,150) 75.8%,rgb(22,48,131) 88.3%,rgb(20,39,108) 94.5%,rgb(18,29,73) 99.2%)"></div>
<div class="a" style="left:1104px;top:0;width:12px;height:64px;background:linear-gradient(180deg,rgb(18,23,68) 0.8%,rgb(18,29,81) 13.3%,rgb(19,40,105) 25.8%,rgb(21,50,131) 38.3%,rgb(23,56,147) 50.8%,rgb(25,59,155) 63.3%,rgb(25,57,150) 75.8%,rgb(22,47,129) 88.3%,rgb(20,39,106) 94.5%,rgb(17,28,72) 99.2%)"></div>
<div class="a" style="left:1116px;top:0;width:12px;height:64px;background:linear-gradient(180deg,rgb(18,23,69) 0.8%,rgb(18,30,82) 13.3%,rgb(19,41,108) 25.8%,rgb(21,51,133) 38.3%,rgb(23,57,150) 50.8%,rgb(25,60,157) 63.3%,rgb(25,57,150) 75.8%,rgb(22,46,128) 88.3%,rgb(20,38,104) 94.5%,rgb(17,28,71) 99.2%)"></div>
<div class="a" style="left:1128px;top:0;width:12px;height:64px;background:linear-gradient(180deg,rgb(18,24,69) 0.8%,rgb(18,30,83) 13.3%,rgb(19,42,110) 25.8%,rgb(21,52,136) 38.3%,rgb(23,58,152) 50.8%,rgb(25,61,159) 63.3%,rgb(24,57,151) 75.8%,rgb(22,45,126) 88.3%,rgb(19,37,102) 94.5%,rgb(17,27,70) 99.2%)"></div>
<div class="a" style="left:1140px;top:0;width:12px;height:64px;background:linear-gradient(180deg,rgb(18,24,69) 0.8%,rgb(18,31,84) 13.3%,rgb(20,43,112) 25.8%,rgb(21,53,139) 38.3%,rgb(23,59,155) 50.8%,rgb(25,61,160) 63.3%,rgb(24,57,151) 75.8%,rgb(21,45,125) 88.3%,rgb(19,36,100) 94.5%,rgb(17,27,69) 99.2%)"></div>
<div class="a" style="left:1152px;top:0;width:12px;height:64px;background:linear-gradient(180deg,rgb(18,24,70) 0.8%,rgb(18,32,85) 13.3%,rgb(20,44,115) 25.8%,rgb(22,54,141) 38.3%,rgb(24,60,157) 50.8%,rgb(25,62,162) 63.3%,rgb(24,57,151) 75.8%,rgb(21,44,123) 88.3%,rgb(19,35,98) 94.5%,rgb(17,26,68) 99.2%)"></div>
<div class="a" style="left:1164px;top:0;width:12px;height:64px;background:linear-gradient(180deg,rgb(18,24,70) 0.8%,rgb(18,32,86) 13.3%,rgb(20,45,117) 25.8%,rgb(22,55,144) 38.3%,rgb(24,61,159) 50.8%,rgb(25,63,164) 63.3%,rgb(24,57,152) 75.8%,rgb(21,43,122) 88.3%,rgb(18,34,96) 94.5%,rgb(17,26,67) 99.2%)"></div>
<div class="a" style="left:1176px;top:0;width:12px;height:64px;background:linear-gradient(180deg,rgb(18,25,70) 0.8%,rgb(18,33,87) 13.3%,rgb(20,46,119) 25.8%,rgb(22,56,146) 38.3%,rgb(24,62,162) 50.8%,rgb(25,63,166) 63.3%,rgb(24,57,152) 75.8%,rgb(21,42,120) 88.3%,rgb(18,33,94) 94.5%,rgb(17,26,66) 99.2%)"></div>
<div class="a" style="left:1188px;top:0;width:12px;height:64px;background:linear-gradient(180deg,rgb(18,25,71) 0.8%,rgb(18,33,88) 13.3%,rgb(20,47,121) 25.8%,rgb(22,57,149) 38.3%,rgb(24,63,164) 50.8%,rgb(25,64,167) 63.3%,rgb(24,57,152) 75.8%,rgb(20,41,118) 88.3%,rgb(18,32,92) 94.5%,rgb(17,25,65) 99.2%)"></div>
<div class="a" style="left:1200px;top:0;width:12px;height:64px;background:linear-gradient(180deg,rgb(18,25,71) 0.8%,rgb(18,34,89) 13.3%,rgb(20,48,124) 25.8%,rgb(22,59,152) 38.3%,rgb(24,64,167) 50.8%,rgb(25,65,169) 63.3%,rgb(24,57,153) 75.8%,rgb(20,41,117) 88.3%,rgb(18,31,90) 94.5%,rgb(16,25,64) 99.2%)"></div>
<div class="a" style="left:1212px;top:0;width:12px;height:64px;background:linear-gradient(180deg,rgb(18,25,71) 0.8%,rgb(18,34,90) 13.3%,rgb(20,49,126) 25.8%,rgb(22,60,154) 38.3%,rgb(25,65,169) 50.8%,rgb(25,65,171) 63.3%,rgb(24,57,153) 75.8%,rgb(20,40,115) 88.3%,rgb(17,30,88) 94.5%,rgb(16,24,63) 99.2%)"></div></div>
<div class="a rule" style="top:119px"></div>
<div class="a rule" style="top:640px"></div>

<div class="a dlg"></div>
<div class="a title"></div>
<div class="a raised" style="left:941px;top:148px;width:16px;height:14px"></div>
<svg class="a" style="left:941px;top:148px" width="16" height="14" viewBox="0 0 16 14"><path d="M4.3 3 L11.7 10.3 M11.7 3 L4.3 10.3" stroke="#000" stroke-width="1.6"/></svg>

<!-- user presets listbox -->
<div class="a sunken" style="left:278px;top:192px;width:187px;height:185px"></div>
<div class="a vd" style="left:288px;top:207px;height:102px"></div>
<!-- philips listbox -->
<div class="a sunken" style="left:278px;top:397px;width:187px;height:185px"></div>
<div class="a vd" style="left:288px;top:412px;height:168px"></div>
<div class="a vd" style="left:307px;top:461px;height:68px"></div>
<div id="ptree"></div>
<div class="a pbox plus" style="left:285px;top:402px"></div>
<div class="a hd" style="left:293px;top:406px;width:5px"></div>
<div class="a pbox plus" style="left:285px;top:417px"></div>
<div class="a hd" style="left:293px;top:421px;width:5px"></div>
<div class="a pbox plus" style="left:285px;top:433px"></div>
<div class="a hd" style="left:293px;top:437px;width:5px"></div>
<div class="a pbox" style="left:285px;top:448px"></div>
<div class="a hd" style="left:293px;top:452px;width:5px"></div>
<div class="a hd" style="left:308px;top:468px;width:9px"></div>
<div class="a hd" style="left:308px;top:483px;width:9px"></div>
<div class="a hd" style="left:308px;top:499px;width:9px"></div>
<div class="a hd" style="left:308px;top:514px;width:9px"></div>
<div class="a hd" style="left:308px;top:529px;width:9px"></div>
<div class="a pbox plus" style="left:285px;top:541px"></div>
<div class="a hd" style="left:293px;top:545px;width:5px"></div>
<div class="a pbox plus" style="left:285px;top:556px"></div>
<div class="a hd" style="left:293px;top:560px;width:5px"></div>
<div class="a pbox plus" style="left:285px;top:572px"></div>
<div class="a hd" style="left:293px;top:576px;width:5px"></div>
<div class="a pbox plus" style="left:285px;top:197px"></div>
<div class="a hd" style="left:293px;top:201px;width:5px"></div>
<div class="a pbox plus" style="left:285px;top:212px"></div>
<div class="a hd" style="left:293px;top:216px;width:5px"></div>
<div class="a hd" style="left:289px;top:232px;width:9px"></div>
<div class="a pbox plus" style="left:285px;top:243px"></div>
<div class="a hd" style="left:293px;top:247px;width:5px"></div>
<div class="a hd" style="left:289px;top:263px;width:9px"></div>
<div class="a hd" style="left:289px;top:278px;width:9px"></div>
<div class="a hd" style="left:289px;top:294px;width:9px"></div>
<div class="a hd" style="left:289px;top:309px;width:9px"></div>

<!-- scrollbar -->
<div class="a" style="left:448px;top:399px;width:15px;height:181px;background-color:#e6e3de;background-image:linear-gradient(45deg,#fff 25%,transparent 25%,transparent 75%,#fff 75%),linear-gradient(45deg,#fff 25%,transparent 25%,transparent 75%,#fff 75%);background-size:2px 2px;background-position:0 0,1px 1px"></div>
<div class="a raised z" style="left:448px;top:399px;width:15px;height:15px"></div>
<svg class="a z" style="left:448px;top:399px" width="15" height="15"><path d="M3.5 9 L11.5 9 L7.5 5 Z" fill="#000"/></svg>
<div class="a raised z" style="left:448px;top:414px;width:15px;height:127px"></div>
<div class="a raised z" style="left:448px;top:565px;width:15px;height:15px"></div>
<svg class="a z" style="left:448px;top:565px" width="15" height="15"><path d="M3.5 6 L11.5 6 L7.5 10 Z" fill="#000"/></svg>
<div class="a" style="z-index:4;left:278px;top:580px;width:187px;height:10px;background:#d9d0cb"></div>
<div class="a" style="z-index:4;left:278px;top:580px;width:187px;height:2px;background:#fff;box-shadow:inset 1px 0 #808080"></div>

<!-- checkbox -->
<div class="a sunken" style="left:279px;top:593px;width:12px;height:12px;background:#fff"></div>
<svg class="a" style="left:279px;top:593px" width="12" height="12"><path d="M2.5 5.5 L4.8 8.3 L9.3 3.2" stroke="#000" stroke-width="2.4" fill="none"/></svg>

<!-- tabs -->
<div class="a tab" style="left:482px;top:177px;width:60px;height:17px"></div>
<div class="a tab" style="left:542px;top:177px;width:57px;height:17px"></div>
<div class="a tab" style="left:599px;top:177px;width:57px;height:17px"></div>
<div class="a tab" style="left:657px;top:177px;width:93px;height:17px"></div>
<div class="a tab" style="left:751px;top:177px;width:63px;height:17px"></div>
<div class="a tab" style="left:815px;top:177px;width:76px;height:17px"></div>
<div class="a tab" style="left:892px;top:177px;width:55px;height:17px"></div>
<div class="a tab" style="left:481px;top:193px;width:56px;height:19px"></div>
<div class="a tab" style="left:537px;top:193px;width:54px;height:19px"></div>
<div class="a tab" style="left:591px;top:193px;width:80px;height:19px"></div>
<div class="a tab" style="left:671px;top:193px;width:74px;height:19px"></div>
<div class="a tab" style="left:745px;top:193px;width:79px;height:19px"></div>
<div class="a tab" style="left:824px;top:193px;width:63px;height:19px"></div>

<!-- panel -->
<div class="a" style="left:480px;top:212px;width:469px;height:370px;box-shadow:inset 1px 1px #fff, inset -1px -1px #404040, inset -2px -2px #808080"></div>
<div class="a" style="left:484px;top:214px;width:461px;height:364px;border:2px solid #7291c8"></div>
<!-- options tab selected -->
<div class="a" style="left:887px;top:193px;width:62px;height:22px;background:#7092d0;box-shadow:inset 1px 1px #fff, inset -1px 0 #404040"></div>
<div class="a" style="left:888px;top:195px;width:59px;height:16px;border:1px dotted #d0501e"></div>

<!-- group boxes -->
<div class="a" style="left:510px;top:246px;width:382px;height:46px;border:1px solid #fff"></div>
<div class="a" style="left:509px;top:245px;width:382px;height:46px;border:1px solid #808080"></div>
<div class="a" style="left:514px;top:243px;width:74px;height:5px;background:#d9d0cb"></div>
<div class="a" style="left:510px;top:313px;width:382px;height:46px;border:1px solid #fff"></div>
<div class="a" style="left:509px;top:312px;width:382px;height:46px;border:1px solid #808080"></div>
<div class="a" style="left:514px;top:310px;width:94px;height:5px;background:#d9d0cb"></div>
<div class="a" style="left:510px;top:385px;width:382px;height:46px;border:1px solid #fff"></div>
<div class="a" style="left:509px;top:384px;width:382px;height:46px;border:1px solid #808080"></div>
<div class="a" style="left:514px;top:382px;width:89px;height:5px;background:#d9d0cb"></div>

<!-- buttons -->
<div class="a raised" style="left:809px;top:258px;width:72px;height:22px"></div>
<div class="a raised" style="left:809px;top:323px;width:72px;height:23px"></div>
<div class="a raised" style="left:809px;top:394px;width:72px;height:22px"></div>
<div class="a" style="left:798px;top:592px;width:72px;height:22px;background:#d9d0cb;box-shadow:inset 0 0 0 1px #000, inset -2px -2px #404040, inset 2px 2px #fff, inset -3px -3px #808080"></div>
<div class="a raised" style="left:878px;top:592px;width:72px;height:22px"></div>

<div class="t" style="left:268.9px;top:149.8px;font-size:11.5px;line-height:11.5px;letter-spacing:0.6px;color:#fff;font-weight:bold;text-shadow:0.6px 0 0 #fff;transform:scaleX(0.891)">Setup</div>
<div class="t" style="left:278.9px;top:175.8px;font-size:12px;line-height:12px;letter-spacing:0.6px;color:#000;transform:scaleX(0.745)">User presets:</div>
<div class="t" style="left:278.9px;top:380.8px;font-size:12px;line-height:12px;letter-spacing:0.6px;color:#000;transform:scaleX(0.708)">Philips presets:</div>
<div class="t" style="left:300.2px;top:194.8px;font-size:12px;line-height:12px;letter-spacing:0.6px;color:#8a8a8a;transform:scaleX(0.759)">Abdominal</div>
<div class="t" style="left:300.2px;top:210.2px;font-size:12px;line-height:12px;letter-spacing:0.6px;color:#8a8a8a;transform:scaleX(0.772)">Cardiac</div>
<div class="t" style="left:300.2px;top:225.7px;font-size:12px;line-height:12px;letter-spacing:0.6px;color:#8a8a8a;transform:scaleX(0.774)">Musculoskeletal</div>
<div class="t" style="left:300.2px;top:241.1px;font-size:12px;line-height:12px;letter-spacing:0.6px;color:#8a8a8a;transform:scaleX(0.803)">OB/GYN</div>
<div class="t" style="left:300.2px;top:256.5px;font-size:12px;line-height:12px;letter-spacing:0.6px;color:#8a8a8a;transform:scaleX(0.753)">Pediatric</div>
<div class="t" style="left:300.2px;top:271.9px;font-size:12px;line-height:12px;letter-spacing:0.6px;color:#8a8a8a;transform:scaleX(0.739)">Small Parts</div>
<div class="t" style="left:300.2px;top:287.4px;font-size:12px;line-height:12px;letter-spacing:0.6px;color:#8a8a8a;transform:scaleX(0.776)">Vascular</div>
<div class="t" style="left:300.2px;top:302.8px;font-size:12px;line-height:12px;letter-spacing:0.6px;color:#8a8a8a;transform:scaleX(0.767)">Abdominal Vascular</div>
<div class="t" style="left:300.2px;top:399.8px;font-size:12px;line-height:12px;letter-spacing:0.6px;color:#8a8a8a;transform:scaleX(0.759)">Abdominal</div>
<div class="t" style="left:300.2px;top:415.2px;font-size:12px;line-height:12px;letter-spacing:0.6px;color:#8a8a8a;transform:scaleX(0.772)">Cardiac</div>
<div class="t" style="left:300.2px;top:430.7px;font-size:12px;line-height:12px;letter-spacing:0.6px;color:#8a8a8a;transform:scaleX(0.774)">Musculoskeletal</div>
<div class="t" style="left:300.2px;top:446.1px;font-size:12px;line-height:12px;letter-spacing:0.6px;color:#8a8a8a;transform:scaleX(0.803)">OB/GYN</div>
<div class="t" style="left:318.7px;top:461.5px;font-size:12px;line-height:12px;letter-spacing:0.6px;color:#8a8a8a;transform:scaleX(0.840)">Pelvis</div>
<div class="t" style="left:318.7px;top:476.9px;font-size:12px;line-height:12px;letter-spacing:0.6px;color:#8a8a8a;transform:scaleX(0.840)">EV Pelvis</div>
<div class="t" style="left:318.7px;top:492.4px;font-size:12px;line-height:12px;letter-spacing:0.6px;color:#8a8a8a;transform:scaleX(0.840)">OB</div>
<div class="t" style="left:318.7px;top:507.8px;font-size:12px;line-height:12px;letter-spacing:0.6px;color:#8a8a8a;transform:scaleX(0.840)">OB Early</div>
<div class="t" style="left:318.7px;top:523.2px;font-size:12px;line-height:12px;letter-spacing:0.6px;color:#8a8a8a;transform:scaleX(0.840)">Fetal Heart</div>
<div class="t" style="left:300.2px;top:538.7px;font-size:12px;line-height:12px;letter-spacing:0.6px;color:#8a8a8a;transform:scaleX(0.753)">Pediatric</div>
<div class="t" style="left:300.2px;top:554.1px;font-size:12px;line-height:12px;letter-spacing:0.6px;color:#8a8a8a;transform:scaleX(0.739)">Small Parts</div>
<div class="t" style="left:300.2px;top:569.5px;font-size:12px;line-height:12px;letter-spacing:0.6px;color:#8a8a8a;transform:scaleX(0.776)">Vascular</div>
<div class="t" style="left:295.5px;top:592.8px;font-size:12px;line-height:12px;letter-spacing:0.6px;color:#000;transform:scaleX(0.781)">Do not save changes to a preset</div>
<div class="t" style="left:495.9px;top:178.8px;font-size:12px;line-height:12px;letter-spacing:0.6px;color:#000;transform:scaleX(0.744)">System</div>
<div class="t" style="left:558.9px;top:178.8px;font-size:12px;line-height:12px;letter-spacing:0.6px;color:#000;transform:scaleX(0.786)">Mode</div>
<div class="t" style="left:614.5px;top:178.8px;font-size:12px;line-height:12px;letter-spacing:0.6px;color:#000;transform:scaleX(0.771)">Label</div>
<div class="t" style="left:670.0px;top:178.8px;font-size:12px;line-height:12px;letter-spacing:0.6px;color:#000;transform:scaleX(0.771)">Measurements</div>
<div class="t" style="left:762.7px;top:178.8px;font-size:12px;line-height:12px;letter-spacing:0.6px;color:#000;transform:scaleX(0.773)">Analysis</div>
<div class="t" style="left:827.8px;top:178.8px;font-size:12px;line-height:12px;letter-spacing:0.6px;color:#000;transform:scaleX(0.816)">Acquistion</div>
<div class="t" style="left:905.6px;top:178.8px;font-size:12px;line-height:12px;letter-spacing:0.6px;color:#000;transform:scaleX(0.746)">Stress</div>
<div class="t" style="left:495.0px;top:195.8px;font-size:12px;line-height:12px;letter-spacing:0.6px;color:#000;transform:scaleX(0.751)">Physio</div>
<div class="t" style="left:558.4px;top:195.8px;font-size:12px;line-height:12px;letter-spacing:0.6px;color:#000;transform:scaleX(0.740)">3D</div>
<div class="t" style="left:604.7px;top:195.8px;font-size:12px;line-height:12px;letter-spacing:0.6px;color:#000;transform:scaleX(0.765)">Optical Disk</div>
<div class="t" style="left:684.4px;top:195.8px;font-size:12px;line-height:12px;letter-spacing:0.6px;color:#000;transform:scaleX(0.749)">Peripherals</div>
<div class="t" style="left:759.8px;top:195.8px;font-size:12px;line-height:12px;letter-spacing:0.6px;color:#000;transform:scaleX(0.757)">Floppy Disk</div>
<div class="t" style="left:836.3px;top:195.8px;font-size:12px;line-height:12px;letter-spacing:0.6px;color:#000;transform:scaleX(0.796)">CDROM</div>
<div class="t" style="left:900.4px;top:196.8px;font-size:12px;line-height:12px;letter-spacing:0.6px;color:#fff;transform:scaleX(0.770)">Options</div>
<div class="t" style="left:517.9px;top:238.8px;font-size:12px;line-height:12px;letter-spacing:0.6px;color:#000;transform:scaleX(0.759)">System options</div>
<div class="t" style="left:517.9px;top:306.8px;font-size:12px;line-height:12px;letter-spacing:0.6px;color:#000;transform:scaleX(0.773)">Configure keyboard</div>
<div class="t" style="left:517.9px;top:378.8px;font-size:12px;line-height:12px;letter-spacing:0.6px;color:#000;transform:scaleX(0.778)">Maintenance tools</div>
<div class="t" style="left:546.5px;top:261.8px;font-size:12px;line-height:12px;letter-spacing:0.6px;color:#000;transform:scaleX(0.758)">Install, remove,or view options.</div>
<div class="t" style="left:546.5px;top:328.8px;font-size:12px;line-height:12px;letter-spacing:0.6px;color:#000;transform:scaleX(0.763)">Configure option keys.</div>
<div class="t" style="left:546.5px;top:399.8px;font-size:12px;line-height:12px;letter-spacing:0.6px;color:#000;transform:scaleX(0.752)">Service system.</div>
<div class="t" style="left:823.9px;top:261.8px;font-size:12px;line-height:12px;letter-spacing:0.6px;color:#000;transform:scaleX(0.726)">Options...</div>
<div class="t" style="left:818.4px;top:327.8px;font-size:12px;line-height:12px;letter-spacing:0.6px;color:#000;transform:scaleX(0.761)">Keyboard...</div>
<div class="t" style="left:823.9px;top:397.8px;font-size:12px;line-height:12px;letter-spacing:0.6px;color:#000;transform:scaleX(0.749)">Service...</div>
<div class="t" style="left:821.9px;top:595.8px;font-size:12px;line-height:12px;letter-spacing:0.6px;color:#000;transform:scaleX(0.725)">Close</div>
<div class="t" style="left:902.0px;top:596.8px;font-size:12px;line-height:12px;letter-spacing:0.6px;color:#fff;transform:scaleX(0.771)">Apply</div>
<div class="t" style="left:901.0px;top:595.8px;font-size:12px;line-height:12px;letter-spacing:0.6px;color:#808080;transform:scaleX(0.771)">Apply</div>

<!-- cursor -->
<svg class="a" style="left:916px;top:205px;z-index:10" width="20" height="26" viewBox="0 0 20 26"><path d="M2.5 2.5 L2.5 17.5 L6 14.2 L9 21 L11.5 20 L8.6 13.3 L13.5 13.3 Z" fill="#fff" stroke="#000" stroke-width="1.3" stroke-linejoin="miter"/></svg>
</body></html>
